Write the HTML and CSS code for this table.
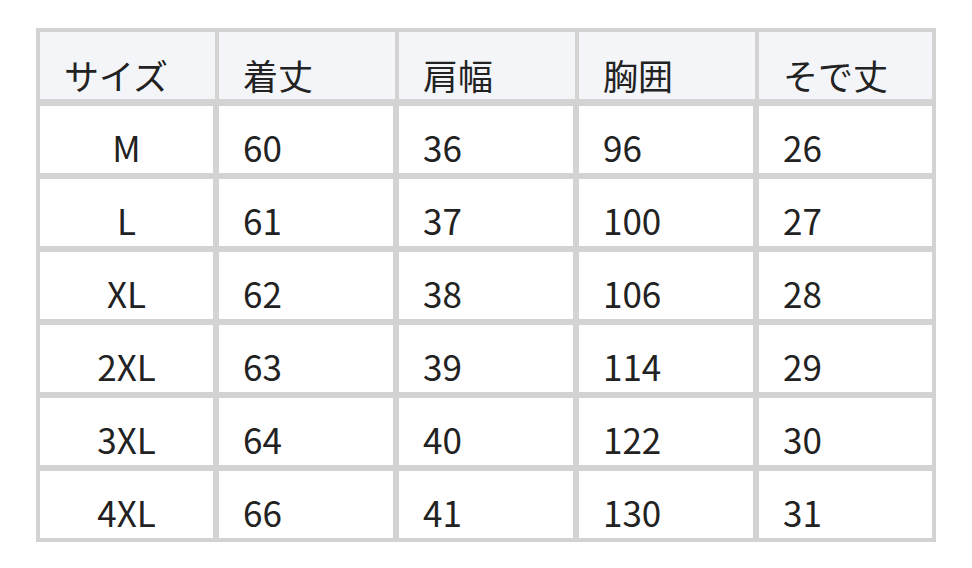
FILE: index.html
```html
<!DOCTYPE html>
<html lang="ja">
<head>
<meta charset="utf-8">
<title>サイズ表</title>
<link rel="stylesheet" href="styles.css">
</head>
<body>
<table class="size-table">
  <colgroup>
    <col class="c1"><col class="c2"><col class="c3"><col class="c4"><col class="c5">
  </colgroup>
  <thead>
    <tr><th>サイズ</th><th>着丈</th><th>肩幅</th><th>胸囲</th><th>そで丈</th></tr>
  </thead>
  <tbody>
    <tr><td class="size">M</td><td>60</td><td>36</td><td>96</td><td>26</td></tr>
    <tr><td class="size">L</td><td>61</td><td>37</td><td>100</td><td>27</td></tr>
    <tr><td class="size">XL</td><td>62</td><td>38</td><td>106</td><td>28</td></tr>
    <tr><td class="size">2XL</td><td>63</td><td>39</td><td>114</td><td>29</td></tr>
    <tr><td class="size">3XL</td><td>64</td><td>40</td><td>122</td><td>30</td></tr>
    <tr><td class="size">4XL</td><td>66</td><td>41</td><td>130</td><td>31</td></tr>
  </tbody>
</table>
</body>
</html>
```

FILE: styles.css
```css
html, body {
  margin: 0;
  padding: 0;
  background: #ffffff;
}
body {
  padding: 28px 0 0 36px;
  font-family: "Noto Sans CJK JP", "Noto Sans", sans-serif;
  color: #222222;
}
.size-table {
  border-collapse: separate;
  border-spacing: 0;
  table-layout: fixed;
  width: 900px;
  border: 1px solid #d3d3d3;
}
.c1, .c5 { width: 179px; }
.c2, .c3, .c4 { width: 180px; }
.size-table th,
.size-table td {
  font-size: 35px;
  line-height: 34px;
  text-align: left;
  vertical-align: bottom;
  padding: 0 0 0 24px;
  font-weight: 400;
}
.size-table th {
  background: #f4f5f9;
  height: 74px;
  padding-bottom: 7px;
  box-sizing: border-box;
  border-top: 3px solid #d3d3d3;
  border-left: 3px solid #d3d3d3;
  border-right: 1px solid #d3d3d3;
  border-bottom: 4px solid #d3d3d3;
}
.size-table th:last-child {
  border-right: 3px solid #d3d3d3;
}
.size-table td {
  background: #ffffff;
  height: 73px;
  box-sizing: border-box;
  padding-bottom: 9px;
  border: 3px solid #d3d3d3;
}
.size-table td.size {
  text-align: center;
  padding-left: 0;
}
```
